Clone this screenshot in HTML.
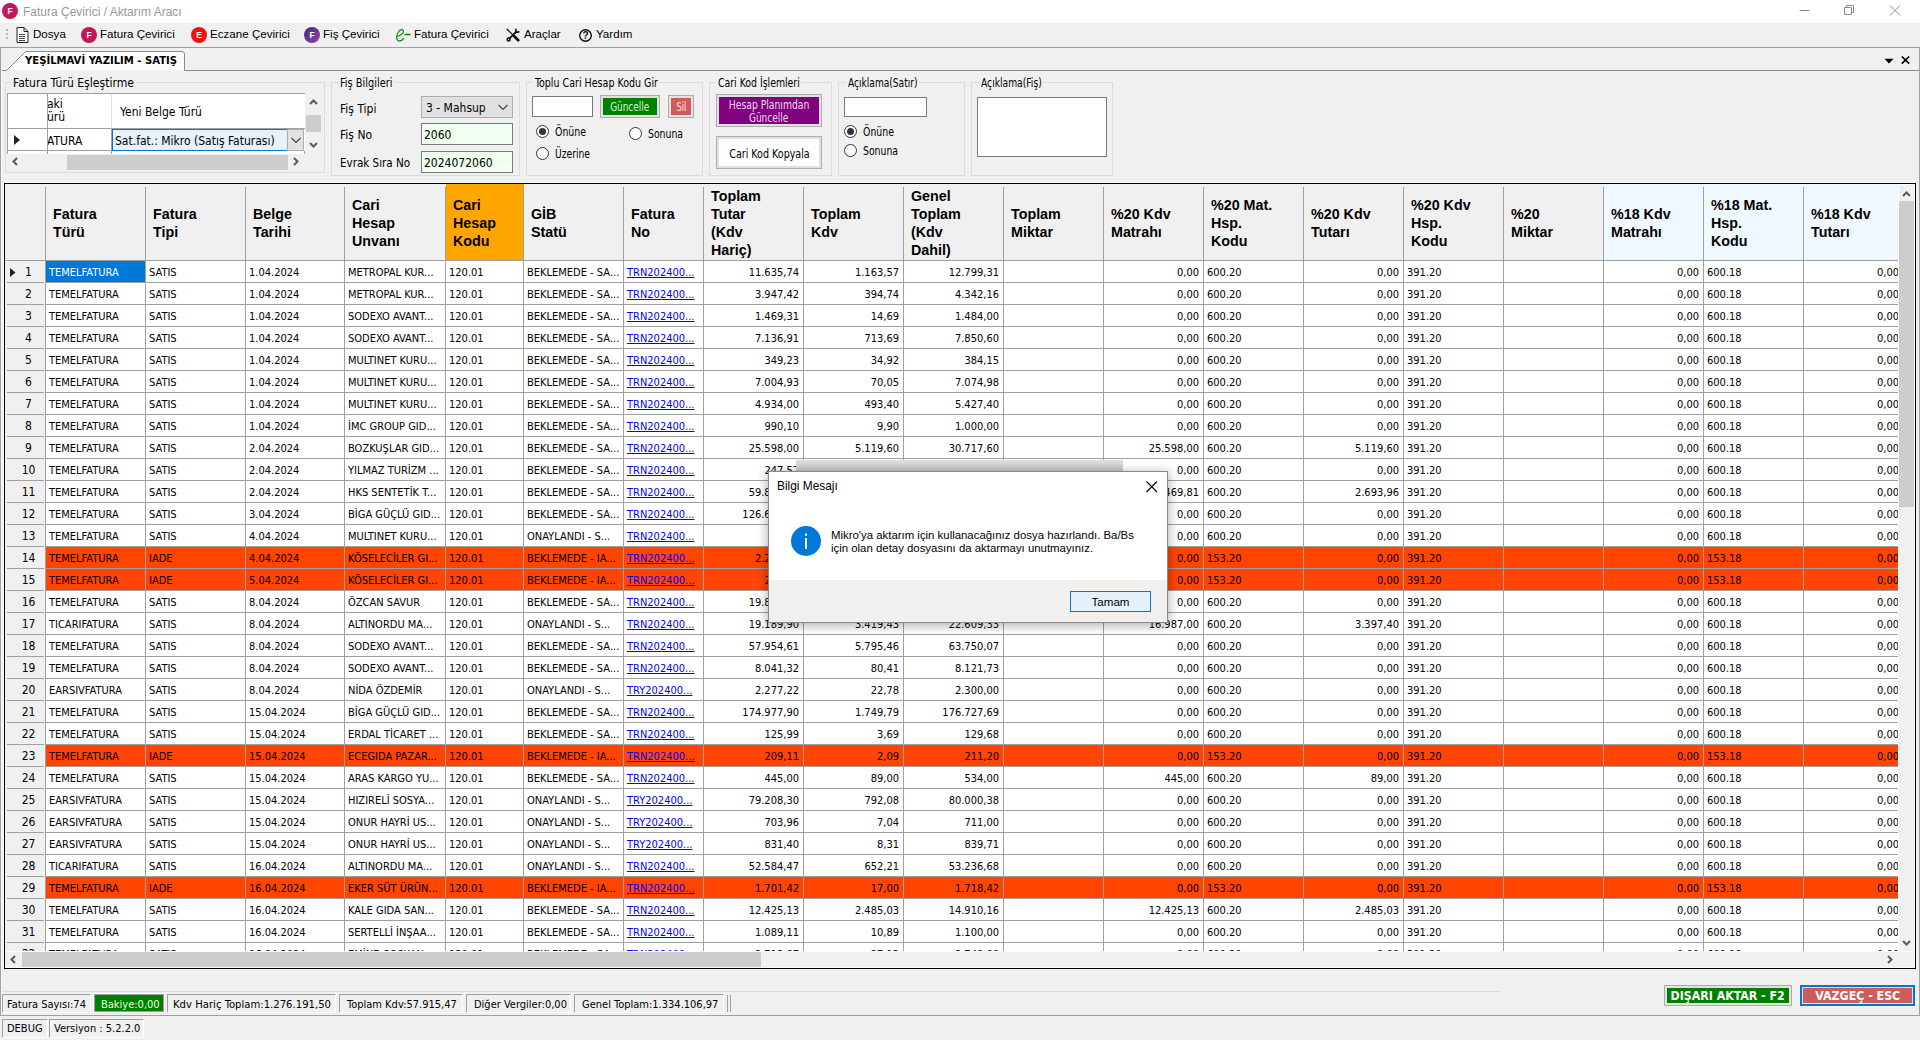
<!DOCTYPE html>
<html lang="tr"><head><meta charset="utf-8"><title>Fatura Çevirici / Aktarım Aracı</title>
<style>
*{box-sizing:border-box;margin:0;padding:0}
html,body{width:1920px;height:1040px;overflow:hidden;background:#f0f0f0}
body{position:relative;font:11px 'DejaVu Sans Condensed','DejaVu Sans','Liberation Sans',sans-serif;color:#000}
.a{position:absolute;white-space:nowrap}
.seg{font-family:'Liberation Sans','DejaVu Sans',sans-serif}
.tah{font-family:'DejaVu Sans Condensed','DejaVu Sans','Liberation Sans',sans-serif}
#title{left:0;top:0;width:1920px;height:23px;background:#fff}
.circ{border-radius:50%;color:#fff;font:bold 8.500px 'Liberation Sans','DejaVu Sans',sans-serif;text-align:center}
.mi{font:11.6px 'Liberation Sans','DejaVu Sans',sans-serif;top:27px;height:14px;line-height:14px}
.gb{border:1px solid #dcdcdc}
.gbl{font:12px 'DejaVu Sans Condensed','DejaVu Sans','Liberation Sans',sans-serif;background:#f0f0f0;height:14px;line-height:14px}
.lbl{font:12px 'DejaVu Sans Condensed','DejaVu Sans','Liberation Sans',sans-serif;height:14px;line-height:14px}
.tb{border:1px solid #7a7a7a;background:#fff;font:12px 'DejaVu Sans Condensed','DejaVu Sans','Liberation Sans',sans-serif;padding-left:2px}
.btn{border:1px solid #adadad;background:#e1e1e1}
.radio{width:13px;height:13px;border:1px solid #333;border-radius:50%;background:#fff}
.radio.on::after{content:"";position:absolute;left:2px;top:2px;width:7px;height:7px;border-radius:50%;background:#333}
#grid{left:5px;top:184px;width:1893px;height:767px;overflow:hidden;background:#fff}
.hc{position:absolute;top:0;height:77px;border-bottom:1px solid #a0a0a0;background:#f0f0f0;font:bold 14.3px 'Liberation Sans','DejaVu Sans',sans-serif;line-height:18px;padding:2px 0 0 7px;display:flex;align-items:center;white-space:normal}
.hc::after{content:"";position:absolute;right:0;top:3px;bottom:0;width:1px;background:#a0a0a0}
.r{position:absolute;left:0;width:1900px;height:22px}
.c{position:absolute;top:0;height:22px;border-right:1px solid #a0a0a0;border-bottom:1px solid #a0a0a0;font:11px 'DejaVu Sans Condensed','DejaVu Sans','Liberation Sans',sans-serif;line-height:23px;padding:0 4px 0 3px;overflow:hidden;white-space:nowrap;background:#fff}
.n{text-align:right}
.o .c{background:#ff4500}
.rh{position:absolute;left:0;top:0;width:41px;height:22px;background:#f0f0f0;border-right:1px solid #a0a0a0;font:12px 'DejaVu Sans Condensed','DejaVu Sans','Liberation Sans',sans-serif;line-height:22px;text-align:center;padding-left:7px}
.rh::after{content:"";position:absolute;left:2px;right:1px;bottom:0;height:1px;background:#a0a0a0}
.lk{color:#00f;text-decoration:underline}
.sp{height:19px;font:11px 'DejaVu Sans Condensed','DejaVu Sans','Liberation Sans',sans-serif;line-height:18px;border:1px solid;border-color:#a0a0a0 #fff #fff #a0a0a0;padding:0 3px}
.chev{fill:none;stroke:#5a5a5a;stroke-width:2}
</style></head>
<body>
<div class="a" id="title"></div>
<div class="a circ" style="left:2px;top:3px;width:16px;height:16px;background:#c2185b;line-height:16px">F</div>
<div class="a seg" style="left:23px;top:5px;font-size:12px;line-height:15px;color:#999">Fatura Çevirici / Aktarım Aracı</div>
<svg class="a" style="left:1790px;top:0" width="130" height="23" viewBox="0 0 130 23" fill="none" stroke="#8a8a8a" stroke-width="1"><path d="M9.500 10.500h10"/><path d="M54.500 7.500h7v7h-7z"/><path d="M56.500 7.500v-2h7v7h-2"/><path d="M100 5.500l10 10M110 5.500l-10 10"/></svg>
<div class="a" style="left:0;top:47px;width:1920px;height:1px;background:#a0a0a0"></div>
<svg class="a" style="left:5px;top:28px" width="4" height="14"><g fill="#b4b4b4"><rect x="1" y="1" width="2" height="2"/><rect x="1" y="5" width="2" height="2"/><rect x="1" y="9" width="2" height="2"/></g></svg>
<svg class="a" style="left:16px;top:27px" width="13" height="16" viewBox="0 0 13 16" fill="none" stroke="#222" stroke-width="1"><path d="M1 .500h7l4 4V15.500H1z" fill="#fff"/><path d="M8 .500v4h4"/><path d="M3 7.500h6M3 9.500h6M3 11.500h6M3 13.500h6" stroke="#444"/></svg>
<div class="a mi" style="left:33px">Dosya</div>
<div class="a circ" style="left:81px;top:27px;width:16px;height:16px;background:#c2185b;line-height:16px">F</div>
<div class="a mi" style="left:100px">Fatura Çevirici</div>
<div class="a circ" style="left:191px;top:27px;width:16px;height:16px;background:#f01010;line-height:16px">E</div>
<div class="a mi" style="left:210px">Eczane Çevirici</div>
<div class="a circ" style="left:304px;top:27px;width:16px;height:16px;background:linear-gradient(135deg,#3b2a7e,#9b3fa8);line-height:16px">F</div>
<div class="a mi" style="left:323px">Fiş Çevirici</div>
<svg class="a" style="left:395px;top:27px" width="18" height="17" viewBox="0 0 18 17" fill="none" stroke="#0a860a" stroke-width="1.200" stroke-linecap="round"><path d="M1.800 9.300C5 9.100 8.600 6.600 8.400 4.200 8.200 2 5.400 2 3.700 4.500 1.900 7.200 1.200 11 2.400 13c1.100 1.800 4.200 1.200 6.200-1.300"/><path d="M10 7.500h5" stroke-width="1.500"/></svg>
<div class="a mi" style="left:414px">Fatura Çevirici</div>
<svg class="a" style="left:506px;top:28px" width="14" height="14" viewBox="0 0 14 14" fill="none" stroke="#111" stroke-linecap="round"><path d="M1.200 1.300l5.600 5.600" stroke-width="1.300"/><path d="M8.300 8.300l3.900 3.900" stroke-width="2.700"/><path d="M3.300 10.700L9.600 4.400" stroke-width="1.900"/><path d="M9.600 4.400l.5-3.200M9.600 4.400l3.200-.5" stroke-width="1.600"/><circle cx="2.600" cy="11.400" r="1.500" stroke-width="1.500"/></svg>
<div class="a mi" style="left:524px">Araçlar</div>
<svg class="a" style="left:578px;top:28px" width="15" height="15" viewBox="0 0 15 15"><circle cx="7.500" cy="7.500" r="5.800" fill="none" stroke="#111" stroke-width="1.400"/><text x="7.500" y="11" text-anchor="middle" font-family="Liberation Sans,sans-serif" font-weight="bold" font-size="10" fill="#111">?</text></svg>
<div class="a mi" style="left:596px">Yardım</div>
<div class="a" style="left:0;top:48px;width:1px;height:968px;background:#a0a0a0"></div>
<div class="a" style="left:1px;top:72px;width:1px;height:943px;background:#fafafa"></div>
<div class="a" style="left:1919px;top:48px;width:1px;height:968px;background:#a0a0a0"></div>
<svg class="a" style="left:0;top:48px" width="1920" height="24" viewBox="0 0 1920 24" fill="none"><path d="M7 22.500L26 4H182q2 0 2 2V22.500z" fill="#fcfcfc" stroke="none"/><path d="M2 22.500H6.500L25.500 3.500H182q2.500 0 2.500 2.500V22.500H1919" fill="none" stroke="#8c8c8c" stroke-width="1"/><path d="M1884.500 10.800h9l-4.500 4.700z" fill="#000"/><path d="M1901.800 8.500l7.400 7.200M1909.200 8.500l-7.400 7.200" stroke="#000" stroke-width="1.700"/></svg>
<div class="a tah" style="left:25px;top:52.500px;font-weight:bold;font-size:11.200px;line-height:16px">YEŞİLMAVİ YAZILIM - SATIŞ</div>
<div class="a gb" style="left:5px;top:82px;width:320px;height:91px"></div>
<div class="a gbl" style="left:11px;top:76px;width:125px;padding-left:2px"><span style="display:inline-block;transform:scaleX(1.007);transform-origin:0 50%">Fatura Türü Eşleştirme</span></div>
<div class="a gb" style="left:331px;top:82px;width:189px;height:94px"></div>
<div class="a gbl" style="left:338px;top:76px;width:56.5px;padding-left:2px"><span style="display:inline-block;transform:scaleX(0.909);transform-origin:0 50%">Fiş Bilgileri</span></div>
<div class="a gb" style="left:526px;top:82px;width:177px;height:94px"></div>
<div class="a gbl" style="left:532.5px;top:76px;width:127px;padding-left:2px"><span style="display:inline-block;transform:scaleX(0.881);transform-origin:0 50%">Toplu Cari Hesap Kodu Gir</span></div>
<div class="a gb" style="left:709px;top:82px;width:123px;height:94px"></div>
<div class="a gbl" style="left:715.5px;top:76px;width:85.75px;padding-left:2px"><span style="display:inline-block;transform:scaleX(0.866);transform-origin:0 50%">Cari Kod İşlemleri</span></div>
<div class="a gb" style="left:838px;top:82px;width:127px;height:94px"></div>
<div class="a gbl" style="left:845.5px;top:76px;width:73.5px;padding-left:2px"><span style="display:inline-block;transform:scaleX(0.841);transform-origin:0 50%">Açıklama(Satır)</span></div>
<div class="a gb" style="left:971px;top:82px;width:142px;height:94px"></div>
<div class="a gbl" style="left:978.5px;top:76px;width:64.75px;padding-left:2px"><span style="display:inline-block;transform:scaleX(0.850);transform-origin:0 50%">Açıklama(Fiş)</span></div>
<div class="a" style="left:7px;top:93px;width:298px;height:61px;background:#fff;overflow:hidden;border-top:1px solid #a0a0a0;border-left:1px solid #a0a0a0"><div class="a" style="left:0;top:0;width:40px;height:35px;border-right:1px solid #a0a0a0;border-bottom:1px solid #a0a0a0"></div><div class="a" style="left:40px;top:0;width:64px;height:35px;border-right:1px solid #e0e0e0;border-bottom:1px solid #a0a0a0;font:12px 'DejaVu Sans Condensed','DejaVu Sans','Liberation Sans',sans-serif;line-height:13px;padding-top:4px;overflow:hidden"><span style="position:relative;left:-1px">aki<br>ürü</span></div><div class="a" style="left:104px;top:0;width:194px;height:35px;border-bottom:1px solid #a0a0a0;font:12px 'DejaVu Sans Condensed','DejaVu Sans','Liberation Sans',sans-serif;line-height:36px;padding-left:8px">Yeni Belge Türü</div><div class="a" style="left:0;top:35px;width:40px;height:22px;border-right:1px solid #a0a0a0;border-bottom:1px solid #a0a0a0"><svg style="position:absolute;left:6px;top:6px" width="7" height="10"><path d="M0 0l6 5-6 5z" fill="#222"/></svg></div><div class="a" style="left:40px;top:35px;width:64px;height:22px;border-right:1px solid #a0a0a0;border-bottom:1px solid #a0a0a0;font:12px 'DejaVu Sans Condensed','DejaVu Sans','Liberation Sans',sans-serif;line-height:24px;overflow:hidden"><span style="position:relative;left:-1px">ATURA</span></div><div class="a" style="left:104px;top:35px;width:192px;height:22px;border:1px solid #0078d7;background:#e5f1fb;font:12px 'DejaVu Sans Condensed','DejaVu Sans','Liberation Sans',sans-serif;line-height:22px;padding-left:2px;overflow:hidden">Sat.fat.: Mikro (Satış Faturası)</div><div class="a" style="left:279px;top:35px;width:17px;height:22px;border:1px solid #adadad;background:#e1e1e1"><svg style="position:absolute;left:3px;top:7px" width="10" height="7" fill="none" stroke="#444" stroke-width="1.100"><path d="M.500 1l4.500 4.500L9.500 1"/></svg></div><div class="a" style="left:0;top:57px;width:40px;height:8px;border-right:1px solid #a0a0a0"></div><div class="a" style="left:40px;top:57px;width:64px;height:8px;border-right:1px solid #a0a0a0"></div><div class="a" style="left:104px;top:57px;width:193px;height:8px;border-right:1px solid #a0a0a0"></div></div>
<div class="a" style="left:305px;top:93px;width:17px;height:61px;background:#f0f0f0"></div>
<div class="a" style="left:306px;top:115px;width:15px;height:17px;background:#cdcdcd"></div>
<svg class="a chev" style="left:309px;top:98px" width="9" height="7"><path d="M1 6l3.500-3.500L8 6"/></svg>
<svg class="a chev" style="left:309px;top:142px" width="9" height="7"><path d="M1 1l3.500 3.500L8 1"/></svg>
<div class="a" style="left:8px;top:154px;width:297px;height:17px;background:#f0f0f0"></div>
<div class="a" style="left:67px;top:155px;width:221px;height:15px;background:#cdcdcd"></div>
<svg class="a chev" style="left:11px;top:157px" width="7" height="9"><path d="M6 1L2.500 4.500 6 8"/></svg>
<svg class="a chev" style="left:293px;top:157px" width="7" height="9"><path d="M1 1l3.500 3.500L1 8"/></svg>
<div class="a lbl" style="left:340px;top:102px">Fiş Tipi</div>
<div class="a lbl" style="left:340px;top:128px">Fiş No</div>
<div class="a lbl" style="left:340px;top:156px"><span style="display:inline-block;transform:scaleX(0.960);transform-origin:0 50%">Evrak Sıra No</span></div>
<div class="a" style="left:421px;top:96px;width:92px;height:22px;border:1px solid #adadad;background:#e1e1e1;font:12px 'DejaVu Sans Condensed','DejaVu Sans','Liberation Sans',sans-serif;line-height:22px;padding-left:4px">3 - Mahsup<svg style="position:absolute;left:76px;top:7px" width="10" height="7" fill="none" stroke="#444" stroke-width="1.100"><path d="M.500 1l4.500 4.500L9.500 1"/></svg></div>
<div class="a tb" style="left:421px;top:123px;width:92px;height:22px;background:#f0fff0;line-height:22px">2060</div>
<div class="a tb" style="left:421px;top:151px;width:92px;height:22px;background:#f0fff0;line-height:22px">2024072060</div>
<div class="a tb" style="left:532px;top:96px;width:61px;height:21px"></div>
<div class="a btn" style="left:600px;top:95px;width:60px;height:23px"></div>
<div class="a" style="left:603px;top:98px;width:54px;height:17px;background:#008000;color:#d8f5d8;font:12px 'DejaVu Sans Condensed','DejaVu Sans','Liberation Sans',sans-serif;line-height:18px;text-align:center"><span style="display:inline-block;transform:scaleX(0.825);transform-origin:50% 50%">Güncelle</span></div>
<div class="a btn" style="left:668px;top:95px;width:26px;height:23px"></div>
<div class="a" style="left:671px;top:98px;width:20px;height:17px;background:#cd5c5c;color:#fbe0e0;font:12px 'DejaVu Sans Condensed','DejaVu Sans','Liberation Sans',sans-serif;line-height:18px;text-align:center"><span style="display:inline-block;transform:scaleX(0.778);transform-origin:50% 50%">Sil</span></div>
<div class="a radio on" style="left:536px;top:125px"></div>
<div class="a lbl" style="left:554.5px;top:125px"><span style="display:inline-block;transform:scaleX(0.869);transform-origin:0 50%">Önüne</span></div>
<div class="a radio" style="left:629px;top:127px"></div>
<div class="a lbl" style="left:647.5px;top:127px"><span style="display:inline-block;transform:scaleX(0.862);transform-origin:0 50%">Sonuna</span></div>
<div class="a radio" style="left:536px;top:147px"></div>
<div class="a lbl" style="left:554.5px;top:147px"><span style="display:inline-block;transform:scaleX(0.851);transform-origin:0 50%">Üzerine</span></div>
<div class="a btn" style="left:716px;top:94px;width:106px;height:33px"></div>
<div class="a" style="left:719px;top:97px;width:100px;height:27px;background:#800080;color:#f0d8f0;font:12px 'DejaVu Sans Condensed','DejaVu Sans','Liberation Sans',sans-serif;line-height:12.500px;text-align:center;white-space:normal;padding-top:2px"><span style="display:inline-block;transform:scaleX(0.856);transform-origin:50% 50%">Hesap Planımdan</span><br><span style="display:inline-block;transform:scaleX(0.835);transform-origin:50% 50%">Güncelle</span></div>
<div class="a btn" style="left:716px;top:136px;width:106px;height:33px"></div>
<div class="a" style="left:719px;top:139px;width:100px;height:27px;background:#fff;font:12px 'DejaVu Sans Condensed','DejaVu Sans','Liberation Sans',sans-serif;line-height:30px;text-align:center"><span style="display:inline-block;transform:scaleX(0.885);transform-origin:50% 50%">Cari Kod Kopyala</span></div>
<div class="a tb" style="left:844px;top:97px;width:83px;height:20px"></div>
<div class="a radio on" style="left:844px;top:125px"></div>
<div class="a lbl" style="left:862.5px;top:125px"><span style="display:inline-block;transform:scaleX(0.869);transform-origin:0 50%">Önüne</span></div>
<div class="a radio" style="left:844px;top:143.5px"></div>
<div class="a lbl" style="left:862.5px;top:143.5px"><span style="display:inline-block;transform:scaleX(0.862);transform-origin:0 50%">Sonuna</span></div>
<div class="a tb" style="left:977px;top:97px;width:130px;height:60px"></div>
<div class="a" style="left:3px;top:182px;width:1912px;height:786px;border:1px solid #fafafa;border-right:0;border-bottom:0"></div>
<div class="a" style="left:4px;top:183px;width:1912px;height:786px;border:1px solid #000"></div>
<div class="a" id="grid"><div class="hc" style="left:0px;width:41px;"><span></span></div><div class="hc" style="left:41px;width:100px;"><span>Fatura<br>Türü</span></div><div class="hc" style="left:141px;width:100px;"><span>Fatura<br>Tipi</span></div><div class="hc" style="left:241px;width:99px;"><span>Belge<br>Tarihi</span></div><div class="hc" style="left:340px;width:101px;"><span>Cari<br>Hesap<br>Unvanı</span></div><div class="hc" style="left:441px;width:78px;background:#ffa500;"><span>Cari<br>Hesap<br>Kodu</span></div><div class="hc" style="left:519px;width:100px;"><span>GİB<br>Statü</span></div><div class="hc" style="left:619px;width:80px;"><span>Fatura<br>No</span></div><div class="hc" style="left:699px;width:100px;"><span>Toplam<br>Tutar<br>(Kdv<br>Hariç)</span></div><div class="hc" style="left:799px;width:100px;"><span>Toplam<br>Kdv</span></div><div class="hc" style="left:899px;width:100px;"><span>Genel<br>Toplam<br>(Kdv<br>Dahil)</span></div><div class="hc" style="left:999px;width:100px;"><span>Toplam<br>Miktar</span></div><div class="hc" style="left:1099px;width:100px;"><span>%20 Kdv<br>Matrahı</span></div><div class="hc" style="left:1199px;width:100px;"><span>%20 Mat.<br>Hsp.<br>Kodu</span></div><div class="hc" style="left:1299px;width:100px;"><span>%20 Kdv<br>Tutarı</span></div><div class="hc" style="left:1399px;width:100px;"><span>%20 Kdv<br>Hsp.<br>Kodu</span></div><div class="hc" style="left:1499px;width:100px;"><span>%20<br>Miktar</span></div><div class="hc" style="left:1599px;width:100px;background:#f0f8ff;"><span>%18 Kdv<br>Matrahı</span></div><div class="hc" style="left:1699px;width:100px;background:#f0f8ff;"><span>%18 Mat.<br>Hsp.<br>Kodu</span></div><div class="hc" style="left:1799px;width:100px;background:#f0f8ff;"><span>%18 Kdv<br>Tutarı</span></div><div class="r" style="top:77px"><div class="rh"><svg style="position:absolute;left:5px;top:7px" width="6" height="9"><path d="M0 0l5.500 4.500L0 9z" fill="#222"/></svg>1</div><div class="c" style="left:41px;width:100px;background:#0078d7;color:#fff">TEMELFATURA</div><div class="c" style="left:141px;width:100px">SATIS</div><div class="c" style="left:241px;width:99px">1.04.2024</div><div class="c" style="left:340px;width:101px">METROPAL KUR...</div><div class="c" style="left:441px;width:78px">120.01</div><div class="c" style="left:519px;width:100px">BEKLEMEDE - SA...</div><div class="c" style="left:619px;width:80px"><span class="lk">TRN202400...</span></div><div class="c n" style="left:699px;width:100px">11.635,74</div><div class="c n" style="left:799px;width:100px">1.163,57</div><div class="c n" style="left:899px;width:100px">12.799,31</div><div class="c n" style="left:999px;width:100px"></div><div class="c n" style="left:1099px;width:100px">0,00</div><div class="c" style="left:1199px;width:100px">600.20</div><div class="c n" style="left:1299px;width:100px">0,00</div><div class="c" style="left:1399px;width:100px">391.20</div><div class="c n" style="left:1499px;width:100px"></div><div class="c n" style="left:1599px;width:100px">0,00</div><div class="c" style="left:1699px;width:100px">600.18</div><div class="c n" style="left:1799px;width:100px">0,00</div></div><div class="r" style="top:99px"><div class="rh">2</div><div class="c" style="left:41px;width:100px">TEMELFATURA</div><div class="c" style="left:141px;width:100px">SATIS</div><div class="c" style="left:241px;width:99px">1.04.2024</div><div class="c" style="left:340px;width:101px">METROPAL KUR...</div><div class="c" style="left:441px;width:78px">120.01</div><div class="c" style="left:519px;width:100px">BEKLEMEDE - SA...</div><div class="c" style="left:619px;width:80px"><span class="lk">TRN202400...</span></div><div class="c n" style="left:699px;width:100px">3.947,42</div><div class="c n" style="left:799px;width:100px">394,74</div><div class="c n" style="left:899px;width:100px">4.342,16</div><div class="c n" style="left:999px;width:100px"></div><div class="c n" style="left:1099px;width:100px">0,00</div><div class="c" style="left:1199px;width:100px">600.20</div><div class="c n" style="left:1299px;width:100px">0,00</div><div class="c" style="left:1399px;width:100px">391.20</div><div class="c n" style="left:1499px;width:100px"></div><div class="c n" style="left:1599px;width:100px">0,00</div><div class="c" style="left:1699px;width:100px">600.18</div><div class="c n" style="left:1799px;width:100px">0,00</div></div><div class="r" style="top:121px"><div class="rh">3</div><div class="c" style="left:41px;width:100px">TEMELFATURA</div><div class="c" style="left:141px;width:100px">SATIS</div><div class="c" style="left:241px;width:99px">1.04.2024</div><div class="c" style="left:340px;width:101px">SODEXO AVANT...</div><div class="c" style="left:441px;width:78px">120.01</div><div class="c" style="left:519px;width:100px">BEKLEMEDE - SA...</div><div class="c" style="left:619px;width:80px"><span class="lk">TRN202400...</span></div><div class="c n" style="left:699px;width:100px">1.469,31</div><div class="c n" style="left:799px;width:100px">14,69</div><div class="c n" style="left:899px;width:100px">1.484,00</div><div class="c n" style="left:999px;width:100px"></div><div class="c n" style="left:1099px;width:100px">0,00</div><div class="c" style="left:1199px;width:100px">600.20</div><div class="c n" style="left:1299px;width:100px">0,00</div><div class="c" style="left:1399px;width:100px">391.20</div><div class="c n" style="left:1499px;width:100px"></div><div class="c n" style="left:1599px;width:100px">0,00</div><div class="c" style="left:1699px;width:100px">600.18</div><div class="c n" style="left:1799px;width:100px">0,00</div></div><div class="r" style="top:143px"><div class="rh">4</div><div class="c" style="left:41px;width:100px">TEMELFATURA</div><div class="c" style="left:141px;width:100px">SATIS</div><div class="c" style="left:241px;width:99px">1.04.2024</div><div class="c" style="left:340px;width:101px">SODEXO AVANT...</div><div class="c" style="left:441px;width:78px">120.01</div><div class="c" style="left:519px;width:100px">BEKLEMEDE - SA...</div><div class="c" style="left:619px;width:80px"><span class="lk">TRN202400...</span></div><div class="c n" style="left:699px;width:100px">7.136,91</div><div class="c n" style="left:799px;width:100px">713,69</div><div class="c n" style="left:899px;width:100px">7.850,60</div><div class="c n" style="left:999px;width:100px"></div><div class="c n" style="left:1099px;width:100px">0,00</div><div class="c" style="left:1199px;width:100px">600.20</div><div class="c n" style="left:1299px;width:100px">0,00</div><div class="c" style="left:1399px;width:100px">391.20</div><div class="c n" style="left:1499px;width:100px"></div><div class="c n" style="left:1599px;width:100px">0,00</div><div class="c" style="left:1699px;width:100px">600.18</div><div class="c n" style="left:1799px;width:100px">0,00</div></div><div class="r" style="top:165px"><div class="rh">5</div><div class="c" style="left:41px;width:100px">TEMELFATURA</div><div class="c" style="left:141px;width:100px">SATIS</div><div class="c" style="left:241px;width:99px">1.04.2024</div><div class="c" style="left:340px;width:101px">MULTINET KURU...</div><div class="c" style="left:441px;width:78px">120.01</div><div class="c" style="left:519px;width:100px">BEKLEMEDE - SA...</div><div class="c" style="left:619px;width:80px"><span class="lk">TRN202400...</span></div><div class="c n" style="left:699px;width:100px">349,23</div><div class="c n" style="left:799px;width:100px">34,92</div><div class="c n" style="left:899px;width:100px">384,15</div><div class="c n" style="left:999px;width:100px"></div><div class="c n" style="left:1099px;width:100px">0,00</div><div class="c" style="left:1199px;width:100px">600.20</div><div class="c n" style="left:1299px;width:100px">0,00</div><div class="c" style="left:1399px;width:100px">391.20</div><div class="c n" style="left:1499px;width:100px"></div><div class="c n" style="left:1599px;width:100px">0,00</div><div class="c" style="left:1699px;width:100px">600.18</div><div class="c n" style="left:1799px;width:100px">0,00</div></div><div class="r" style="top:187px"><div class="rh">6</div><div class="c" style="left:41px;width:100px">TEMELFATURA</div><div class="c" style="left:141px;width:100px">SATIS</div><div class="c" style="left:241px;width:99px">1.04.2024</div><div class="c" style="left:340px;width:101px">MULTINET KURU...</div><div class="c" style="left:441px;width:78px">120.01</div><div class="c" style="left:519px;width:100px">BEKLEMEDE - SA...</div><div class="c" style="left:619px;width:80px"><span class="lk">TRN202400...</span></div><div class="c n" style="left:699px;width:100px">7.004,93</div><div class="c n" style="left:799px;width:100px">70,05</div><div class="c n" style="left:899px;width:100px">7.074,98</div><div class="c n" style="left:999px;width:100px"></div><div class="c n" style="left:1099px;width:100px">0,00</div><div class="c" style="left:1199px;width:100px">600.20</div><div class="c n" style="left:1299px;width:100px">0,00</div><div class="c" style="left:1399px;width:100px">391.20</div><div class="c n" style="left:1499px;width:100px"></div><div class="c n" style="left:1599px;width:100px">0,00</div><div class="c" style="left:1699px;width:100px">600.18</div><div class="c n" style="left:1799px;width:100px">0,00</div></div><div class="r" style="top:209px"><div class="rh">7</div><div class="c" style="left:41px;width:100px">TEMELFATURA</div><div class="c" style="left:141px;width:100px">SATIS</div><div class="c" style="left:241px;width:99px">1.04.2024</div><div class="c" style="left:340px;width:101px">MULTINET KURU...</div><div class="c" style="left:441px;width:78px">120.01</div><div class="c" style="left:519px;width:100px">BEKLEMEDE - SA...</div><div class="c" style="left:619px;width:80px"><span class="lk">TRN202400...</span></div><div class="c n" style="left:699px;width:100px">4.934,00</div><div class="c n" style="left:799px;width:100px">493,40</div><div class="c n" style="left:899px;width:100px">5.427,40</div><div class="c n" style="left:999px;width:100px"></div><div class="c n" style="left:1099px;width:100px">0,00</div><div class="c" style="left:1199px;width:100px">600.20</div><div class="c n" style="left:1299px;width:100px">0,00</div><div class="c" style="left:1399px;width:100px">391.20</div><div class="c n" style="left:1499px;width:100px"></div><div class="c n" style="left:1599px;width:100px">0,00</div><div class="c" style="left:1699px;width:100px">600.18</div><div class="c n" style="left:1799px;width:100px">0,00</div></div><div class="r" style="top:231px"><div class="rh">8</div><div class="c" style="left:41px;width:100px">TEMELFATURA</div><div class="c" style="left:141px;width:100px">SATIS</div><div class="c" style="left:241px;width:99px">1.04.2024</div><div class="c" style="left:340px;width:101px">İMC GROUP GID...</div><div class="c" style="left:441px;width:78px">120.01</div><div class="c" style="left:519px;width:100px">BEKLEMEDE - SA...</div><div class="c" style="left:619px;width:80px"><span class="lk">TRN202400...</span></div><div class="c n" style="left:699px;width:100px">990,10</div><div class="c n" style="left:799px;width:100px">9,90</div><div class="c n" style="left:899px;width:100px">1.000,00</div><div class="c n" style="left:999px;width:100px"></div><div class="c n" style="left:1099px;width:100px">0,00</div><div class="c" style="left:1199px;width:100px">600.20</div><div class="c n" style="left:1299px;width:100px">0,00</div><div class="c" style="left:1399px;width:100px">391.20</div><div class="c n" style="left:1499px;width:100px"></div><div class="c n" style="left:1599px;width:100px">0,00</div><div class="c" style="left:1699px;width:100px">600.18</div><div class="c n" style="left:1799px;width:100px">0,00</div></div><div class="r" style="top:253px"><div class="rh">9</div><div class="c" style="left:41px;width:100px">TEMELFATURA</div><div class="c" style="left:141px;width:100px">SATIS</div><div class="c" style="left:241px;width:99px">2.04.2024</div><div class="c" style="left:340px;width:101px">BOZKUŞLAR GID...</div><div class="c" style="left:441px;width:78px">120.01</div><div class="c" style="left:519px;width:100px">BEKLEMEDE - SA...</div><div class="c" style="left:619px;width:80px"><span class="lk">TRN202400...</span></div><div class="c n" style="left:699px;width:100px">25.598,00</div><div class="c n" style="left:799px;width:100px">5.119,60</div><div class="c n" style="left:899px;width:100px">30.717,60</div><div class="c n" style="left:999px;width:100px"></div><div class="c n" style="left:1099px;width:100px">25.598,00</div><div class="c" style="left:1199px;width:100px">600.20</div><div class="c n" style="left:1299px;width:100px">5.119,60</div><div class="c" style="left:1399px;width:100px">391.20</div><div class="c n" style="left:1499px;width:100px"></div><div class="c n" style="left:1599px;width:100px">0,00</div><div class="c" style="left:1699px;width:100px">600.18</div><div class="c n" style="left:1799px;width:100px">0,00</div></div><div class="r" style="top:275px"><div class="rh">10</div><div class="c" style="left:41px;width:100px">TEMELFATURA</div><div class="c" style="left:141px;width:100px">SATIS</div><div class="c" style="left:241px;width:99px">2.04.2024</div><div class="c" style="left:340px;width:101px">YILMAZ TURİZM ...</div><div class="c" style="left:441px;width:78px">120.01</div><div class="c" style="left:519px;width:100px">BEKLEMEDE - SA...</div><div class="c" style="left:619px;width:80px"><span class="lk">TRN202400...</span></div><div class="c n" style="left:699px;width:100px">247,52</div><div class="c n" style="left:799px;width:100px">2,48</div><div class="c n" style="left:899px;width:100px">250,00</div><div class="c n" style="left:999px;width:100px"></div><div class="c n" style="left:1099px;width:100px">0,00</div><div class="c" style="left:1199px;width:100px">600.20</div><div class="c n" style="left:1299px;width:100px">0,00</div><div class="c" style="left:1399px;width:100px">391.20</div><div class="c n" style="left:1499px;width:100px"></div><div class="c n" style="left:1599px;width:100px">0,00</div><div class="c" style="left:1699px;width:100px">600.18</div><div class="c n" style="left:1799px;width:100px">0,00</div></div><div class="r" style="top:297px"><div class="rh">11</div><div class="c" style="left:41px;width:100px">TEMELFATURA</div><div class="c" style="left:141px;width:100px">SATIS</div><div class="c" style="left:241px;width:99px">2.04.2024</div><div class="c" style="left:340px;width:101px">HKS SENTETİK T...</div><div class="c" style="left:441px;width:78px">120.01</div><div class="c" style="left:519px;width:100px">BEKLEMEDE - SA...</div><div class="c" style="left:619px;width:80px"><span class="lk">TRN202400...</span></div><div class="c n" style="left:699px;width:100px">59.832,61</div><div class="c n" style="left:799px;width:100px">2.828,66</div><div class="c n" style="left:899px;width:100px">62.661,27</div><div class="c n" style="left:999px;width:100px"></div><div class="c n" style="left:1099px;width:100px">13.469,81</div><div class="c" style="left:1199px;width:100px">600.20</div><div class="c n" style="left:1299px;width:100px">2.693,96</div><div class="c" style="left:1399px;width:100px">391.20</div><div class="c n" style="left:1499px;width:100px"></div><div class="c n" style="left:1599px;width:100px">0,00</div><div class="c" style="left:1699px;width:100px">600.18</div><div class="c n" style="left:1799px;width:100px">0,00</div></div><div class="r" style="top:319px"><div class="rh">12</div><div class="c" style="left:41px;width:100px">TEMELFATURA</div><div class="c" style="left:141px;width:100px">SATIS</div><div class="c" style="left:241px;width:99px">3.04.2024</div><div class="c" style="left:340px;width:101px">BİGA GÜÇLÜ GID...</div><div class="c" style="left:441px;width:78px">120.01</div><div class="c" style="left:519px;width:100px">BEKLEMEDE - SA...</div><div class="c" style="left:619px;width:80px"><span class="lk">TRN202400...</span></div><div class="c n" style="left:699px;width:100px">126.642,30</div><div class="c n" style="left:799px;width:100px">1.266,42</div><div class="c n" style="left:899px;width:100px">127.908,72</div><div class="c n" style="left:999px;width:100px"></div><div class="c n" style="left:1099px;width:100px">0,00</div><div class="c" style="left:1199px;width:100px">600.20</div><div class="c n" style="left:1299px;width:100px">0,00</div><div class="c" style="left:1399px;width:100px">391.20</div><div class="c n" style="left:1499px;width:100px"></div><div class="c n" style="left:1599px;width:100px">0,00</div><div class="c" style="left:1699px;width:100px">600.18</div><div class="c n" style="left:1799px;width:100px">0,00</div></div><div class="r" style="top:341px"><div class="rh">13</div><div class="c" style="left:41px;width:100px">TEMELFATURA</div><div class="c" style="left:141px;width:100px">SATIS</div><div class="c" style="left:241px;width:99px">4.04.2024</div><div class="c" style="left:340px;width:101px">MULTINET KURU...</div><div class="c" style="left:441px;width:78px">120.01</div><div class="c" style="left:519px;width:100px">ONAYLANDI - S...</div><div class="c" style="left:619px;width:80px"><span class="lk">TRN202400...</span></div><div class="c n" style="left:699px;width:100px">49,50</div><div class="c n" style="left:799px;width:100px">0,50</div><div class="c n" style="left:899px;width:100px">50,00</div><div class="c n" style="left:999px;width:100px"></div><div class="c n" style="left:1099px;width:100px">0,00</div><div class="c" style="left:1199px;width:100px">600.20</div><div class="c n" style="left:1299px;width:100px">0,00</div><div class="c" style="left:1399px;width:100px">391.20</div><div class="c n" style="left:1499px;width:100px"></div><div class="c n" style="left:1599px;width:100px">0,00</div><div class="c" style="left:1699px;width:100px">600.18</div><div class="c n" style="left:1799px;width:100px">0,00</div></div><div class="r o" style="top:363px"><div class="rh">14</div><div class="c" style="left:41px;width:100px">TEMELFATURA</div><div class="c" style="left:141px;width:100px">IADE</div><div class="c" style="left:241px;width:99px">4.04.2024</div><div class="c" style="left:340px;width:101px">KÖSELECİLER GI...</div><div class="c" style="left:441px;width:78px">120.01</div><div class="c" style="left:519px;width:100px">BEKLEMEDE - IA...</div><div class="c" style="left:619px;width:80px"><span class="lk">TRN202400...</span></div><div class="c n" style="left:699px;width:100px">2.214,85</div><div class="c n" style="left:799px;width:100px">22,15</div><div class="c n" style="left:899px;width:100px">2.237,00</div><div class="c n" style="left:999px;width:100px"></div><div class="c n" style="left:1099px;width:100px">0,00</div><div class="c" style="left:1199px;width:100px">153.20</div><div class="c n" style="left:1299px;width:100px">0,00</div><div class="c" style="left:1399px;width:100px">391.20</div><div class="c n" style="left:1499px;width:100px"></div><div class="c n" style="left:1599px;width:100px">0,00</div><div class="c" style="left:1699px;width:100px">153.18</div><div class="c n" style="left:1799px;width:100px">0,00</div></div><div class="r o" style="top:385px"><div class="rh">15</div><div class="c" style="left:41px;width:100px">TEMELFATURA</div><div class="c" style="left:141px;width:100px">IADE</div><div class="c" style="left:241px;width:99px">5.04.2024</div><div class="c" style="left:340px;width:101px">KÖSELECİLER GI...</div><div class="c" style="left:441px;width:78px">120.01</div><div class="c" style="left:519px;width:100px">BEKLEMEDE - IA...</div><div class="c" style="left:619px;width:80px"><span class="lk">TRN202400...</span></div><div class="c n" style="left:699px;width:100px">241,58</div><div class="c n" style="left:799px;width:100px">2,42</div><div class="c n" style="left:899px;width:100px">244,00</div><div class="c n" style="left:999px;width:100px"></div><div class="c n" style="left:1099px;width:100px">0,00</div><div class="c" style="left:1199px;width:100px">153.20</div><div class="c n" style="left:1299px;width:100px">0,00</div><div class="c" style="left:1399px;width:100px">391.20</div><div class="c n" style="left:1499px;width:100px"></div><div class="c n" style="left:1599px;width:100px">0,00</div><div class="c" style="left:1699px;width:100px">153.18</div><div class="c n" style="left:1799px;width:100px">0,00</div></div><div class="r" style="top:407px"><div class="rh">16</div><div class="c" style="left:41px;width:100px">TEMELFATURA</div><div class="c" style="left:141px;width:100px">SATIS</div><div class="c" style="left:241px;width:99px">8.04.2024</div><div class="c" style="left:340px;width:101px">ÖZCAN SAVUR</div><div class="c" style="left:441px;width:78px">120.01</div><div class="c" style="left:519px;width:100px">BEKLEMEDE - SA...</div><div class="c" style="left:619px;width:80px"><span class="lk">TRN202400...</span></div><div class="c n" style="left:699px;width:100px">19.801,98</div><div class="c n" style="left:799px;width:100px">198,02</div><div class="c n" style="left:899px;width:100px">20.000,00</div><div class="c n" style="left:999px;width:100px"></div><div class="c n" style="left:1099px;width:100px">0,00</div><div class="c" style="left:1199px;width:100px">600.20</div><div class="c n" style="left:1299px;width:100px">0,00</div><div class="c" style="left:1399px;width:100px">391.20</div><div class="c n" style="left:1499px;width:100px"></div><div class="c n" style="left:1599px;width:100px">0,00</div><div class="c" style="left:1699px;width:100px">600.18</div><div class="c n" style="left:1799px;width:100px">0,00</div></div><div class="r" style="top:429px"><div class="rh">17</div><div class="c" style="left:41px;width:100px">TICARIFATURA</div><div class="c" style="left:141px;width:100px">SATIS</div><div class="c" style="left:241px;width:99px">8.04.2024</div><div class="c" style="left:340px;width:101px">ALTINORDU MA...</div><div class="c" style="left:441px;width:78px">120.01</div><div class="c" style="left:519px;width:100px">ONAYLANDI - S...</div><div class="c" style="left:619px;width:80px"><span class="lk">TRN202400...</span></div><div class="c n" style="left:699px;width:100px">19.189,90</div><div class="c n" style="left:799px;width:100px">3.419,43</div><div class="c n" style="left:899px;width:100px">22.609,33</div><div class="c n" style="left:999px;width:100px"></div><div class="c n" style="left:1099px;width:100px">16.987,00</div><div class="c" style="left:1199px;width:100px">600.20</div><div class="c n" style="left:1299px;width:100px">3.397,40</div><div class="c" style="left:1399px;width:100px">391.20</div><div class="c n" style="left:1499px;width:100px"></div><div class="c n" style="left:1599px;width:100px">0,00</div><div class="c" style="left:1699px;width:100px">600.18</div><div class="c n" style="left:1799px;width:100px">0,00</div></div><div class="r" style="top:451px"><div class="rh">18</div><div class="c" style="left:41px;width:100px">TEMELFATURA</div><div class="c" style="left:141px;width:100px">SATIS</div><div class="c" style="left:241px;width:99px">8.04.2024</div><div class="c" style="left:340px;width:101px">SODEXO AVANT...</div><div class="c" style="left:441px;width:78px">120.01</div><div class="c" style="left:519px;width:100px">BEKLEMEDE - SA...</div><div class="c" style="left:619px;width:80px"><span class="lk">TRN202400...</span></div><div class="c n" style="left:699px;width:100px">57.954,61</div><div class="c n" style="left:799px;width:100px">5.795,46</div><div class="c n" style="left:899px;width:100px">63.750,07</div><div class="c n" style="left:999px;width:100px"></div><div class="c n" style="left:1099px;width:100px">0,00</div><div class="c" style="left:1199px;width:100px">600.20</div><div class="c n" style="left:1299px;width:100px">0,00</div><div class="c" style="left:1399px;width:100px">391.20</div><div class="c n" style="left:1499px;width:100px"></div><div class="c n" style="left:1599px;width:100px">0,00</div><div class="c" style="left:1699px;width:100px">600.18</div><div class="c n" style="left:1799px;width:100px">0,00</div></div><div class="r" style="top:473px"><div class="rh">19</div><div class="c" style="left:41px;width:100px">TEMELFATURA</div><div class="c" style="left:141px;width:100px">SATIS</div><div class="c" style="left:241px;width:99px">8.04.2024</div><div class="c" style="left:340px;width:101px">SODEXO AVANT...</div><div class="c" style="left:441px;width:78px">120.01</div><div class="c" style="left:519px;width:100px">BEKLEMEDE - SA...</div><div class="c" style="left:619px;width:80px"><span class="lk">TRN202400...</span></div><div class="c n" style="left:699px;width:100px">8.041,32</div><div class="c n" style="left:799px;width:100px">80,41</div><div class="c n" style="left:899px;width:100px">8.121,73</div><div class="c n" style="left:999px;width:100px"></div><div class="c n" style="left:1099px;width:100px">0,00</div><div class="c" style="left:1199px;width:100px">600.20</div><div class="c n" style="left:1299px;width:100px">0,00</div><div class="c" style="left:1399px;width:100px">391.20</div><div class="c n" style="left:1499px;width:100px"></div><div class="c n" style="left:1599px;width:100px">0,00</div><div class="c" style="left:1699px;width:100px">600.18</div><div class="c n" style="left:1799px;width:100px">0,00</div></div><div class="r" style="top:495px"><div class="rh">20</div><div class="c" style="left:41px;width:100px">EARSIVFATURA</div><div class="c" style="left:141px;width:100px">SATIS</div><div class="c" style="left:241px;width:99px">8.04.2024</div><div class="c" style="left:340px;width:101px">NİDA ÖZDEMİR</div><div class="c" style="left:441px;width:78px">120.01</div><div class="c" style="left:519px;width:100px">ONAYLANDI - S...</div><div class="c" style="left:619px;width:80px"><span class="lk">TRY202400...</span></div><div class="c n" style="left:699px;width:100px">2.277,22</div><div class="c n" style="left:799px;width:100px">22,78</div><div class="c n" style="left:899px;width:100px">2.300,00</div><div class="c n" style="left:999px;width:100px"></div><div class="c n" style="left:1099px;width:100px">0,00</div><div class="c" style="left:1199px;width:100px">600.20</div><div class="c n" style="left:1299px;width:100px">0,00</div><div class="c" style="left:1399px;width:100px">391.20</div><div class="c n" style="left:1499px;width:100px"></div><div class="c n" style="left:1599px;width:100px">0,00</div><div class="c" style="left:1699px;width:100px">600.18</div><div class="c n" style="left:1799px;width:100px">0,00</div></div><div class="r" style="top:517px"><div class="rh">21</div><div class="c" style="left:41px;width:100px">TEMELFATURA</div><div class="c" style="left:141px;width:100px">SATIS</div><div class="c" style="left:241px;width:99px">15.04.2024</div><div class="c" style="left:340px;width:101px">BİGA GÜÇLÜ GID...</div><div class="c" style="left:441px;width:78px">120.01</div><div class="c" style="left:519px;width:100px">BEKLEMEDE - SA...</div><div class="c" style="left:619px;width:80px"><span class="lk">TRN202400...</span></div><div class="c n" style="left:699px;width:100px">174.977,90</div><div class="c n" style="left:799px;width:100px">1.749,79</div><div class="c n" style="left:899px;width:100px">176.727,69</div><div class="c n" style="left:999px;width:100px"></div><div class="c n" style="left:1099px;width:100px">0,00</div><div class="c" style="left:1199px;width:100px">600.20</div><div class="c n" style="left:1299px;width:100px">0,00</div><div class="c" style="left:1399px;width:100px">391.20</div><div class="c n" style="left:1499px;width:100px"></div><div class="c n" style="left:1599px;width:100px">0,00</div><div class="c" style="left:1699px;width:100px">600.18</div><div class="c n" style="left:1799px;width:100px">0,00</div></div><div class="r" style="top:539px"><div class="rh">22</div><div class="c" style="left:41px;width:100px">TEMELFATURA</div><div class="c" style="left:141px;width:100px">SATIS</div><div class="c" style="left:241px;width:99px">15.04.2024</div><div class="c" style="left:340px;width:101px">ERDAL TİCARET ...</div><div class="c" style="left:441px;width:78px">120.01</div><div class="c" style="left:519px;width:100px">BEKLEMEDE - SA...</div><div class="c" style="left:619px;width:80px"><span class="lk">TRN202400...</span></div><div class="c n" style="left:699px;width:100px">125,99</div><div class="c n" style="left:799px;width:100px">3,69</div><div class="c n" style="left:899px;width:100px">129,68</div><div class="c n" style="left:999px;width:100px"></div><div class="c n" style="left:1099px;width:100px">0,00</div><div class="c" style="left:1199px;width:100px">600.20</div><div class="c n" style="left:1299px;width:100px">0,00</div><div class="c" style="left:1399px;width:100px">391.20</div><div class="c n" style="left:1499px;width:100px"></div><div class="c n" style="left:1599px;width:100px">0,00</div><div class="c" style="left:1699px;width:100px">600.18</div><div class="c n" style="left:1799px;width:100px">0,00</div></div><div class="r o" style="top:561px"><div class="rh">23</div><div class="c" style="left:41px;width:100px">TEMELFATURA</div><div class="c" style="left:141px;width:100px">IADE</div><div class="c" style="left:241px;width:99px">15.04.2024</div><div class="c" style="left:340px;width:101px">ECEGIDA PAZAR...</div><div class="c" style="left:441px;width:78px">120.01</div><div class="c" style="left:519px;width:100px">BEKLEMEDE - IA...</div><div class="c" style="left:619px;width:80px"><span class="lk">TRN202400...</span></div><div class="c n" style="left:699px;width:100px">209,11</div><div class="c n" style="left:799px;width:100px">2,09</div><div class="c n" style="left:899px;width:100px">211,20</div><div class="c n" style="left:999px;width:100px"></div><div class="c n" style="left:1099px;width:100px">0,00</div><div class="c" style="left:1199px;width:100px">153.20</div><div class="c n" style="left:1299px;width:100px">0,00</div><div class="c" style="left:1399px;width:100px">391.20</div><div class="c n" style="left:1499px;width:100px"></div><div class="c n" style="left:1599px;width:100px">0,00</div><div class="c" style="left:1699px;width:100px">153.18</div><div class="c n" style="left:1799px;width:100px">0,00</div></div><div class="r" style="top:583px"><div class="rh">24</div><div class="c" style="left:41px;width:100px">TEMELFATURA</div><div class="c" style="left:141px;width:100px">SATIS</div><div class="c" style="left:241px;width:99px">15.04.2024</div><div class="c" style="left:340px;width:101px">ARAS KARGO YU...</div><div class="c" style="left:441px;width:78px">120.01</div><div class="c" style="left:519px;width:100px">BEKLEMEDE - SA...</div><div class="c" style="left:619px;width:80px"><span class="lk">TRN202400...</span></div><div class="c n" style="left:699px;width:100px">445,00</div><div class="c n" style="left:799px;width:100px">89,00</div><div class="c n" style="left:899px;width:100px">534,00</div><div class="c n" style="left:999px;width:100px"></div><div class="c n" style="left:1099px;width:100px">445,00</div><div class="c" style="left:1199px;width:100px">600.20</div><div class="c n" style="left:1299px;width:100px">89,00</div><div class="c" style="left:1399px;width:100px">391.20</div><div class="c n" style="left:1499px;width:100px"></div><div class="c n" style="left:1599px;width:100px">0,00</div><div class="c" style="left:1699px;width:100px">600.18</div><div class="c n" style="left:1799px;width:100px">0,00</div></div><div class="r" style="top:605px"><div class="rh">25</div><div class="c" style="left:41px;width:100px">EARSIVFATURA</div><div class="c" style="left:141px;width:100px">SATIS</div><div class="c" style="left:241px;width:99px">15.04.2024</div><div class="c" style="left:340px;width:101px">HIZIRELİ SOSYA...</div><div class="c" style="left:441px;width:78px">120.01</div><div class="c" style="left:519px;width:100px">ONAYLANDI - S...</div><div class="c" style="left:619px;width:80px"><span class="lk">TRY202400...</span></div><div class="c n" style="left:699px;width:100px">79.208,30</div><div class="c n" style="left:799px;width:100px">792,08</div><div class="c n" style="left:899px;width:100px">80.000,38</div><div class="c n" style="left:999px;width:100px"></div><div class="c n" style="left:1099px;width:100px">0,00</div><div class="c" style="left:1199px;width:100px">600.20</div><div class="c n" style="left:1299px;width:100px">0,00</div><div class="c" style="left:1399px;width:100px">391.20</div><div class="c n" style="left:1499px;width:100px"></div><div class="c n" style="left:1599px;width:100px">0,00</div><div class="c" style="left:1699px;width:100px">600.18</div><div class="c n" style="left:1799px;width:100px">0,00</div></div><div class="r" style="top:627px"><div class="rh">26</div><div class="c" style="left:41px;width:100px">EARSIVFATURA</div><div class="c" style="left:141px;width:100px">SATIS</div><div class="c" style="left:241px;width:99px">15.04.2024</div><div class="c" style="left:340px;width:101px">ONUR HAYRİ US...</div><div class="c" style="left:441px;width:78px">120.01</div><div class="c" style="left:519px;width:100px">ONAYLANDI - S...</div><div class="c" style="left:619px;width:80px"><span class="lk">TRY202400...</span></div><div class="c n" style="left:699px;width:100px">703,96</div><div class="c n" style="left:799px;width:100px">7,04</div><div class="c n" style="left:899px;width:100px">711,00</div><div class="c n" style="left:999px;width:100px"></div><div class="c n" style="left:1099px;width:100px">0,00</div><div class="c" style="left:1199px;width:100px">600.20</div><div class="c n" style="left:1299px;width:100px">0,00</div><div class="c" style="left:1399px;width:100px">391.20</div><div class="c n" style="left:1499px;width:100px"></div><div class="c n" style="left:1599px;width:100px">0,00</div><div class="c" style="left:1699px;width:100px">600.18</div><div class="c n" style="left:1799px;width:100px">0,00</div></div><div class="r" style="top:649px"><div class="rh">27</div><div class="c" style="left:41px;width:100px">EARSIVFATURA</div><div class="c" style="left:141px;width:100px">SATIS</div><div class="c" style="left:241px;width:99px">15.04.2024</div><div class="c" style="left:340px;width:101px">ONUR HAYRİ US...</div><div class="c" style="left:441px;width:78px">120.01</div><div class="c" style="left:519px;width:100px">ONAYLANDI - S...</div><div class="c" style="left:619px;width:80px"><span class="lk">TRY202400...</span></div><div class="c n" style="left:699px;width:100px">831,40</div><div class="c n" style="left:799px;width:100px">8,31</div><div class="c n" style="left:899px;width:100px">839,71</div><div class="c n" style="left:999px;width:100px"></div><div class="c n" style="left:1099px;width:100px">0,00</div><div class="c" style="left:1199px;width:100px">600.20</div><div class="c n" style="left:1299px;width:100px">0,00</div><div class="c" style="left:1399px;width:100px">391.20</div><div class="c n" style="left:1499px;width:100px"></div><div class="c n" style="left:1599px;width:100px">0,00</div><div class="c" style="left:1699px;width:100px">600.18</div><div class="c n" style="left:1799px;width:100px">0,00</div></div><div class="r" style="top:671px"><div class="rh">28</div><div class="c" style="left:41px;width:100px">TICARIFATURA</div><div class="c" style="left:141px;width:100px">SATIS</div><div class="c" style="left:241px;width:99px">16.04.2024</div><div class="c" style="left:340px;width:101px">ALTINORDU MA...</div><div class="c" style="left:441px;width:78px">120.01</div><div class="c" style="left:519px;width:100px">ONAYLANDI - S...</div><div class="c" style="left:619px;width:80px"><span class="lk">TRN202400...</span></div><div class="c n" style="left:699px;width:100px">52.584,47</div><div class="c n" style="left:799px;width:100px">652,21</div><div class="c n" style="left:899px;width:100px">53.236,68</div><div class="c n" style="left:999px;width:100px"></div><div class="c n" style="left:1099px;width:100px">0,00</div><div class="c" style="left:1199px;width:100px">600.20</div><div class="c n" style="left:1299px;width:100px">0,00</div><div class="c" style="left:1399px;width:100px">391.20</div><div class="c n" style="left:1499px;width:100px"></div><div class="c n" style="left:1599px;width:100px">0,00</div><div class="c" style="left:1699px;width:100px">600.18</div><div class="c n" style="left:1799px;width:100px">0,00</div></div><div class="r o" style="top:693px"><div class="rh">29</div><div class="c" style="left:41px;width:100px">TEMELFATURA</div><div class="c" style="left:141px;width:100px">IADE</div><div class="c" style="left:241px;width:99px">16.04.2024</div><div class="c" style="left:340px;width:101px">EKER SÜT ÜRÜN...</div><div class="c" style="left:441px;width:78px">120.01</div><div class="c" style="left:519px;width:100px">BEKLEMEDE - IA...</div><div class="c" style="left:619px;width:80px"><span class="lk">TRN202400...</span></div><div class="c n" style="left:699px;width:100px">1.701,42</div><div class="c n" style="left:799px;width:100px">17,00</div><div class="c n" style="left:899px;width:100px">1.718,42</div><div class="c n" style="left:999px;width:100px"></div><div class="c n" style="left:1099px;width:100px">0,00</div><div class="c" style="left:1199px;width:100px">153.20</div><div class="c n" style="left:1299px;width:100px">0,00</div><div class="c" style="left:1399px;width:100px">391.20</div><div class="c n" style="left:1499px;width:100px"></div><div class="c n" style="left:1599px;width:100px">0,00</div><div class="c" style="left:1699px;width:100px">153.18</div><div class="c n" style="left:1799px;width:100px">0,00</div></div><div class="r" style="top:715px"><div class="rh">30</div><div class="c" style="left:41px;width:100px">TEMELFATURA</div><div class="c" style="left:141px;width:100px">SATIS</div><div class="c" style="left:241px;width:99px">16.04.2024</div><div class="c" style="left:340px;width:101px">KALE GIDA SAN...</div><div class="c" style="left:441px;width:78px">120.01</div><div class="c" style="left:519px;width:100px">BEKLEMEDE - SA...</div><div class="c" style="left:619px;width:80px"><span class="lk">TRN202400...</span></div><div class="c n" style="left:699px;width:100px">12.425,13</div><div class="c n" style="left:799px;width:100px">2.485,03</div><div class="c n" style="left:899px;width:100px">14.910,16</div><div class="c n" style="left:999px;width:100px"></div><div class="c n" style="left:1099px;width:100px">12.425,13</div><div class="c" style="left:1199px;width:100px">600.20</div><div class="c n" style="left:1299px;width:100px">2.485,03</div><div class="c" style="left:1399px;width:100px">391.20</div><div class="c n" style="left:1499px;width:100px"></div><div class="c n" style="left:1599px;width:100px">0,00</div><div class="c" style="left:1699px;width:100px">600.18</div><div class="c n" style="left:1799px;width:100px">0,00</div></div><div class="r" style="top:737px"><div class="rh">31</div><div class="c" style="left:41px;width:100px">TEMELFATURA</div><div class="c" style="left:141px;width:100px">SATIS</div><div class="c" style="left:241px;width:99px">16.04.2024</div><div class="c" style="left:340px;width:101px">SERTELLİ İNŞAA...</div><div class="c" style="left:441px;width:78px">120.01</div><div class="c" style="left:519px;width:100px">BEKLEMEDE - SA...</div><div class="c" style="left:619px;width:80px"><span class="lk">TRN202400...</span></div><div class="c n" style="left:699px;width:100px">1.089,11</div><div class="c n" style="left:799px;width:100px">10,89</div><div class="c n" style="left:899px;width:100px">1.100,00</div><div class="c n" style="left:999px;width:100px"></div><div class="c n" style="left:1099px;width:100px">0,00</div><div class="c" style="left:1199px;width:100px">600.20</div><div class="c n" style="left:1299px;width:100px">0,00</div><div class="c" style="left:1399px;width:100px">391.20</div><div class="c n" style="left:1499px;width:100px"></div><div class="c n" style="left:1599px;width:100px">0,00</div><div class="c" style="left:1699px;width:100px">600.18</div><div class="c n" style="left:1799px;width:100px">0,00</div></div><div class="r" style="top:759px"><div class="rh">32</div><div class="c" style="left:41px;width:100px">TEMELFATURA</div><div class="c" style="left:141px;width:100px">SATIS</div><div class="c" style="left:241px;width:99px">16.04.2024</div><div class="c" style="left:340px;width:101px">EMİNE COŞKAN...</div><div class="c" style="left:441px;width:78px">120.01</div><div class="c" style="left:519px;width:100px">BEKLEMEDE - SA...</div><div class="c" style="left:619px;width:80px"><span class="lk">TRN202400...</span></div><div class="c n" style="left:699px;width:100px">2.712,87</div><div class="c n" style="left:799px;width:100px">27,13</div><div class="c n" style="left:899px;width:100px">2.740,00</div><div class="c n" style="left:999px;width:100px"></div><div class="c n" style="left:1099px;width:100px">0,00</div><div class="c" style="left:1199px;width:100px">600.20</div><div class="c n" style="left:1299px;width:100px">0,00</div><div class="c" style="left:1399px;width:100px">391.20</div><div class="c n" style="left:1499px;width:100px"></div><div class="c n" style="left:1599px;width:100px">0,00</div><div class="c" style="left:1699px;width:100px">600.18</div><div class="c n" style="left:1799px;width:100px">0,00</div></div></div>
<div class="a" style="left:1898px;top:184px;width:17px;height:767px;background:#f0f0f0;border:1px solid #fcfcfc;border-bottom:0"></div>
<div class="a" style="left:1899px;top:201px;width:15px;height:306px;background:#cdcdcd"></div>
<svg class="a chev" style="left:1902px;top:189.500px" width="9" height="7"><path d="M1 6l3.500-3.500L8 6"/></svg>
<svg class="a chev" style="left:1902px;top:939.500px" width="9" height="7"><path d="M1 1l3.500 3.500L8 1"/></svg>
<div class="a" style="left:5px;top:951px;width:1910px;height:17px;background:#f0f0f0;border:1px solid #fcfcfc;border-left:0"></div>
<div class="a" style="left:22px;top:952px;width:739px;height:15px;background:#cdcdcd"></div>
<svg class="a chev" style="left:9px;top:955px" width="7" height="9"><path d="M6 1L2.500 4.500 6 8"/></svg>
<svg class="a chev" style="left:1887px;top:955px" width="7" height="9"><path d="M1 1l3.500 3.500L1 8"/></svg>
<div class="a" style="left:2px;top:991px;width:1498px;height:1px;background:#dcdcdc"></div>
<div class="a sp" style="left:2px;top:994px;width:89px;padding-left:4px;padding-top:1px">Fatura Sayısı:74</div>
<div class="a" style="left:93px;top:993px;width:72px;height:20px;background:#008000;border:1px solid #fff;outline:1px solid #a0a0a0;outline-offset:-2px;color:#e8ffe8;font:11px 'DejaVu Sans Condensed','DejaVu Sans','Liberation Sans',sans-serif;line-height:21px;padding-left:7px">Bakiye:0,00</div>
<div class="a sp" style="left:167px;top:994px;width:169px;padding-left:5px;padding-top:1px"><span style="display:inline-block;transform:scaleX(1.019);transform-origin:0 50%">Kdv Hariç Toplam:1.276.191,50</span></div>
<div class="a sp" style="left:339px;top:994px;width:124px;padding-left:7px;padding-top:1px">Toplam Kdv:57.915,47</div>
<div class="a sp" style="left:466px;top:994px;width:105px;padding-left:7px;padding-top:1px">Diğer Vergiler:0,00</div>
<div class="a sp" style="left:574px;top:994px;width:150px;padding-left:7px;padding-top:1px">Genel Toplam:1.334.106,97</div>
<div class="a" style="left:727px;top:995px;width:1px;height:17px;background:#a0a0a0"></div>
<div class="a" style="left:730px;top:995px;width:1px;height:17px;background:#a0a0a0"></div>
<div class="a btn" style="left:1664px;top:985px;width:128px;height:21px"></div>
<div class="a" style="left:1667px;top:988px;width:122px;height:15px;background:#008000;color:#fff;font:bold 11.500px 'DejaVu Sans Condensed','DejaVu Sans','Liberation Sans',sans-serif;line-height:17px;text-align:center;overflow:hidden"><span style="display:inline-block;transform:scaleX(1.063);transform-origin:50% 50%">DIŞARI AKTAR - F2</span></div>
<div class="a" style="left:1800px;top:985px;width:115px;height:21px;border:2px solid #0078d7;background:#e1e1e1"></div>
<div class="a" style="left:1803px;top:988px;width:109px;height:15px;background:#cd5c5c;color:#fff;font:bold 11.500px 'DejaVu Sans Condensed','DejaVu Sans','Liberation Sans',sans-serif;line-height:17px;text-align:center;overflow:hidden"><span style="display:inline-block;transform:scaleX(1.069);transform-origin:50% 50%">VAZGEÇ - ESC</span></div>
<div class="a" style="left:0;top:1015px;width:1920px;height:1px;background:#a0a0a0"></div>
<div class="a sp" style="left:2px;top:1019px;width:46px;padding-left:4px">DEBUG</div>
<div class="a sp" style="left:49px;top:1019px;width:95px;padding-left:4px">Versiyon : 5.2.2.0</div>
<div class="a" style="left:796px;top:460px;width:327px;height:12px;background:linear-gradient(#e2e2e2,#c2c2c2)"></div>
<div class="a" style="left:768px;top:471px;width:400px;height:152px;background:#fff;border:1px solid #8a8a8a;box-shadow:0 2px 10px 1px rgba(0,0,0,.3)"><div class="a" style="left:0;top:108px;width:398px;height:42px;background:#f0f0f0"></div><div class="a seg" style="left:8px;top:7px;font-size:11.900px;line-height:15px">Bilgi Mesajı</div><svg class="a" style="left:377px;top:9px" width="12" height="12" fill="none" stroke="#000" stroke-width="1.100"><path d="M.500 .500l10.500 10.500M11 .500L.500 11"/></svg><svg class="a" style="left:21px;top:53px" width="32" height="32" viewBox="0 0 32 32"><circle cx="16" cy="16" r="15" fill="#0078d7"/><rect x="15" y="13" width="2" height="11" fill="#fff"/><rect x="15" y="8.500" width="2" height="2.200" fill="#fff"/></svg><div class="a seg" style="left:62px;top:57px;font-size:11.400px;line-height:13px;white-space:normal;width:320px">Mikro'ya aktarım için kullanacağınız dosya hazırlandı. Ba/Bs<br>için olan detay dosyasını da aktarmayı unutmayınız.</div><div class="a seg" style="left:301px;top:119px;width:81px;height:21px;border:1px solid #0078d7;background:#e5f1fb;font-size:11.600px;line-height:20px;text-align:center">Tamam</div></div>
</body></html>
